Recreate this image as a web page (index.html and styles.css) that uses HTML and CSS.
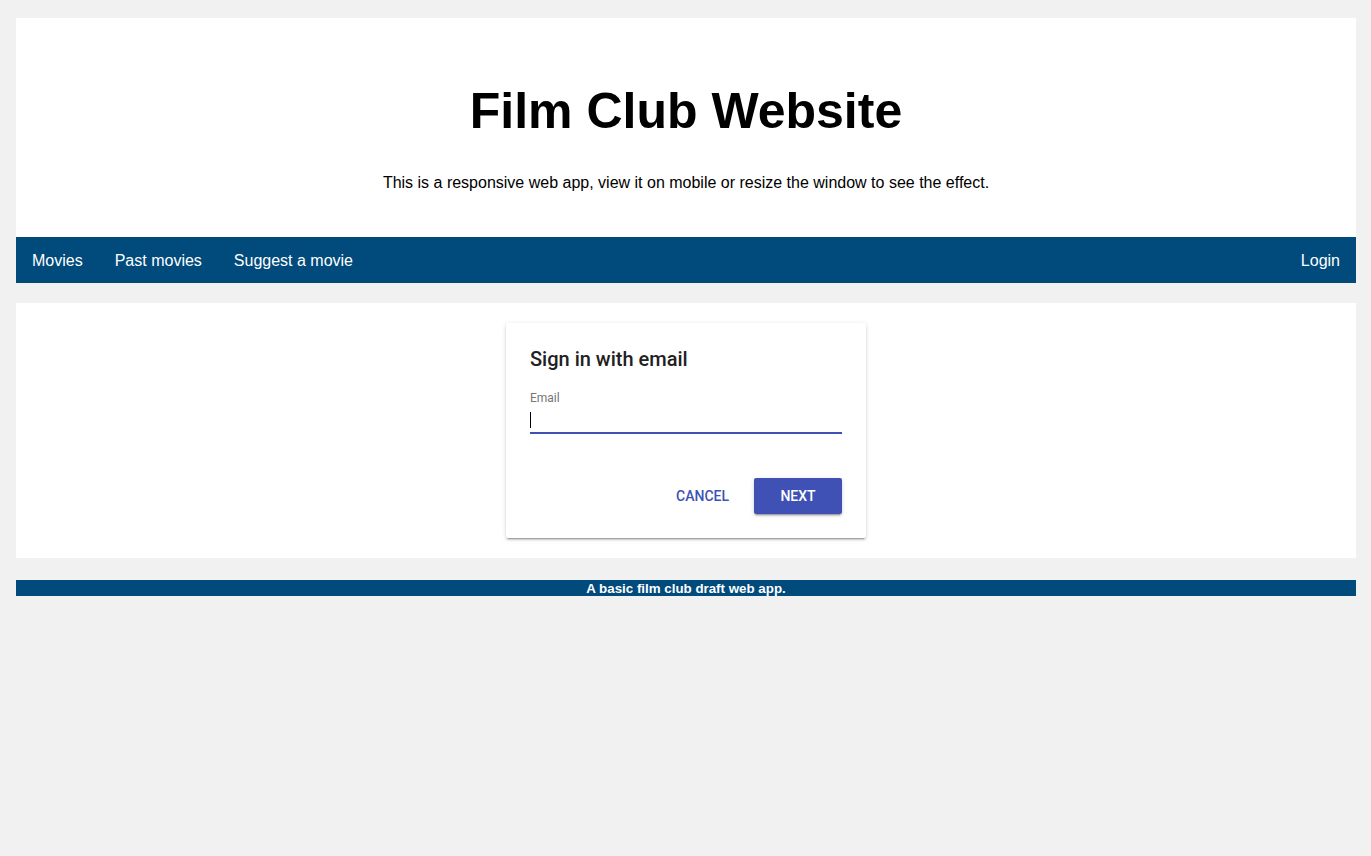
FILE: index.html
```html
<!DOCTYPE html>
<html>
<head>
<meta charset="utf-8">
<title>Film Club Website</title>
<link rel="stylesheet" href="styles.css">
</head>
<body>
<div class="page">
  <header class="header">
    <h1 class="title">Film Club Website</h1>
    <p class="subtitle">This is a responsive web app, view it on mobile or resize the window to see the effect.</p>
  </header>
  <nav class="nav">
    <div class="nav-left">
      <a class="nav-link">Movies</a>
      <a class="nav-link">Past movies</a>
      <a class="nav-link">Suggest a movie</a>
    </div>
    <a class="nav-link">Login</a>
  </nav>
  <main class="main">
    <div class="card">
      <h2 class="card-title">Sign in with email</h2>
      <div class="field">
        <label class="field-label">Email</label>
        <div class="field-input"><span class="caret"></span></div>
      </div>
      <div class="actions">
        <button class="btn btn-flat">CANCEL</button>
        <button class="btn btn-raised">NEXT</button>
      </div>
    </div>
  </main>
  <footer class="footer">A basic film club draft web app.</footer>
</div>
</body>
</html>
```

FILE: styles.css
```css
html, body {
  margin: 0;
  padding: 0;
  background: #f1f1f1;
}
body {
  font-family: "Liberation Sans", Arial, sans-serif;
}
.page {
  padding: 18px 15px 0 16px;
  display: flex;
  flex-direction: column;
}
.header {
  background: #fff;
  height: 219px;
  box-sizing: border-box;
  padding-top: 66px;
  text-align: center;
}
.title {
  margin: 0;
  font-size: 50px;
  line-height: 54px;
  font-weight: bold;
  color: #000;
}
.subtitle {
  margin: 35px 0 0;
  font-size: 16px;
  line-height: 20px;
  color: #000;
}
.nav {
  background: #004a7c;
  height: 46px;
  box-sizing: border-box;
  padding-top: 1px;
  display: flex;
  align-items: center;
  justify-content: space-between;
}
.nav-left {
  display: flex;
}
.nav-link {
  color: #fff;
  font-size: 16px;
  padding: 0 16px;
  line-height: 45px;
}
.main {
  background: #fff;
  margin-top: 20px;
  padding: 20px 0;
  display: flex;
  justify-content: center;
}
.card {
  width: 360px;
  height: 215px;
  box-sizing: border-box;
  padding: 24px 24px 0;
  background: #fff;
  border-radius: 2px;
  box-shadow: 0 2px 2px 0 rgba(0,0,0,.14), 0 3px 1px -2px rgba(0,0,0,.2), 0 1px 5px 0 rgba(0,0,0,.12);
  font-family: Roboto, "Liberation Sans", sans-serif;
}
.card-title {
  margin: 0;
  font-size: 20px;
  font-weight: 500;
  line-height: 24px;
  color: #212121;
}
.field {
  margin-top: 20px;
}
.field-label {
  display: block;
  font-size: 12px;
  line-height: 14px;
  color: #757575;
}
.field-input {
  height: 29px;
  border-bottom: 2px solid #3f51b5;
  box-sizing: border-box;
  padding-top: 7px;
}
.caret {
  display: block;
  width: 1px;
  height: 16px;
  background: #000;
}
.actions {
  margin-top: 44px;
  display: flex;
  justify-content: flex-end;
  gap: 9px;
}
.btn {
  font-family: Roboto, "Liberation Sans", sans-serif;
  font-size: 14px;
  font-weight: 500;
  height: 36px;
  min-width: 64px;
  padding: 0 16px;
  border: none;
  border-radius: 2px;
  letter-spacing: 0;
  cursor: pointer;
}
.btn-flat {
  background: transparent;
  color: #3f51b5;
}
.btn-raised {
  background: #3f51b5;
  color: #fff;
  width: 88px;
  box-shadow: 0 2px 2px 0 rgba(0,0,0,.14), 0 3px 1px -2px rgba(0,0,0,.2), 0 1px 5px 0 rgba(0,0,0,.12);
}
.footer {
  margin-top: 22px;
  height: 16px;
  box-sizing: border-box;
  padding-top: 1px;
  background: #004a7c;
  color: #fff;
  text-align: center;
  font-size: 13.33px;
  font-weight: bold;
  line-height: 15px;
}
```
